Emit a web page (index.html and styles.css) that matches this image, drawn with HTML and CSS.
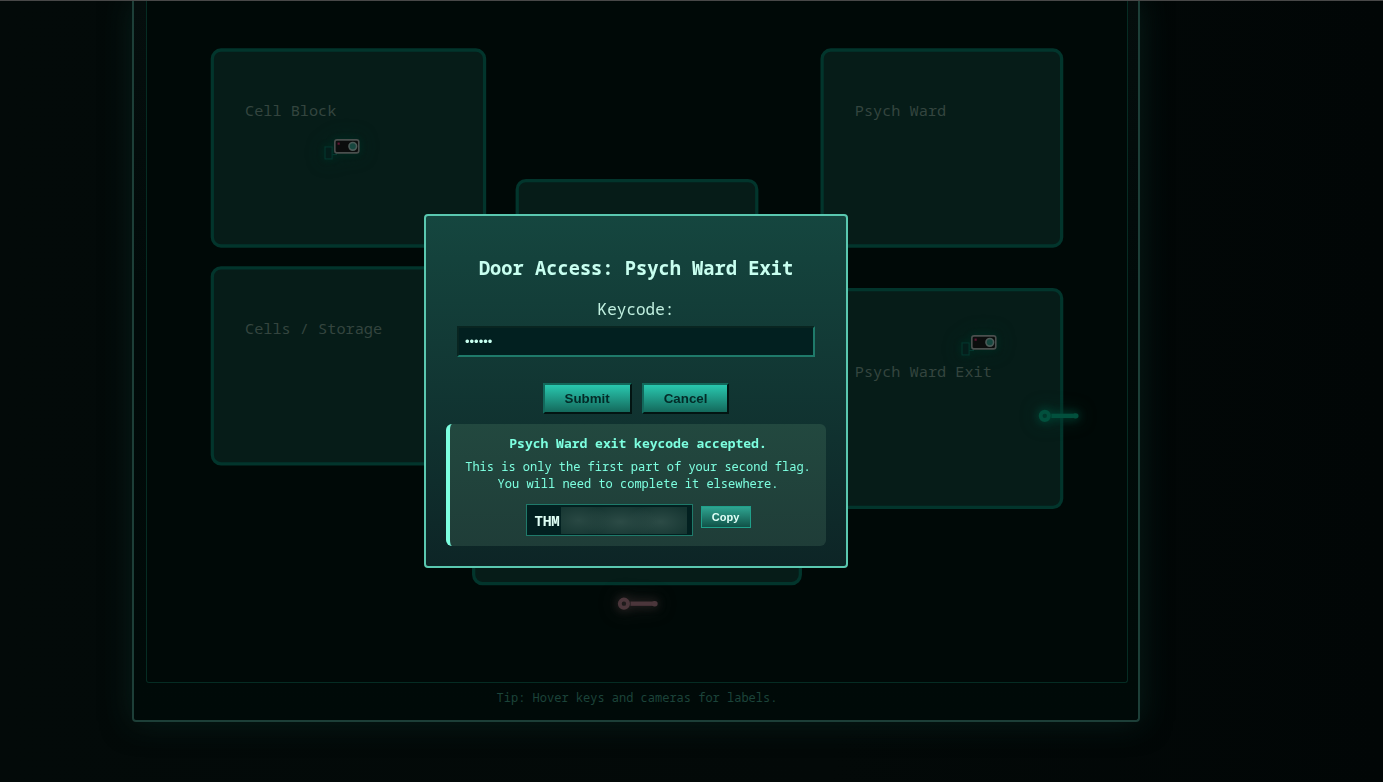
FILE: index.html
```html
<!DOCTYPE html>
<html lang="en">
<head>
    <meta charset="UTF-8">
    <meta name="viewport" content="width=device-width, initial-scale=1.0">
    <title>Door Access</title>
    <link rel="stylesheet" href="styles.css">
</head>
<body>
    <main class="console">
        <svg class="map" viewBox="0 15 900 625" role="img" aria-label="Facility map">
            <defs>
                <g id="camera">
                    <g class="camera-mount">
                        <rect x="163.5" y="149" width="6.5" height="11"/>
                        <path d="M170 156h4v-3"/>
                    </g>
                    <rect class="camera-body" x="172.5" y="142.5" width="22" height="12" rx="2"/>
                    <circle class="camera-lens" cx="189" cy="148.5" r="3.5"/>
                    <rect class="camera-led" x="175" y="145" width="2" height="2"/>
                </g>
                <g id="key">
                    <circle cx="0" cy="0" r="3.8" fill="none" stroke-width="3.6"/>
                    <path d="M6 0H28" stroke-width="4"/>
                    <path d="M28 0H28.5" stroke-width="5" stroke-linecap="round"/>
                </g>
            </defs>

            <!-- Rooms -->
            <rect class="room" x="60" y="60" width="250" height="180" rx="8"/>
            <rect class="room" x="60" y="260" width="250" height="180" rx="8"/>
            <rect class="room" x="340" y="180" width="220" height="200" rx="8"/>
            <rect class="room" x="620" y="60" width="220" height="180" rx="8"/>
            <rect class="room" x="620" y="280" width="220" height="200" rx="8"/>
            <rect class="room" x="300" y="450" width="300" height="100" rx="8"/>

            <text class="room-label" x="90" y="121">Cell Block</text>
            <text class="room-label" x="90" y="321">Cells / Storage</text>
            <text class="room-label" x="650" y="121">Psych Ward</text>
            <text class="room-label" x="650" y="360">Psych Ward Exit</text>

            <!-- Cameras -->
            <use class="camera" href="#camera"/>
            <use class="camera" href="#camera" x="585" y="180"/>

            <!-- Keys -->
            <use class="key-open" href="#key" x="824.5" y="396"/>
            <use class="key-locked" href="#key" x="438" y="568.5"/>
        </svg>
        <p class="tip">Tip: Hover keys and cameras for labels.</p>
    </main>

    <div class="overlay">
        <form class="modal" role="dialog" aria-labelledby="doorTitle">
            <h3 id="doorTitle">Door Access: Psych Ward Exit</h3>
            <label for="keycode">Keycode:</label>
            <input type="password" id="keycode" value="123456">
            <div class="actions">
                <button type="button">Submit</button>
                <button type="button">Cancel</button>
            </div>
            <div class="message">
                <strong>Psych Ward exit keycode accepted.</strong>
                <p>This is only the first part of your second flag. You will need to complete it elsewhere.</p>
                <div class="flag-row">
                    <code class="flag">THM<span class="redacted"></span></code>
                    <button type="button" class="copy">Copy</button>
                </div>
            </div>
        </form>
    </div>
</body>
</html>
```
FILE: styles.css
```css
* {
    box-sizing: border-box;
}
body {
    margin: 0;
    min-height: 100vh;
    padding: 0 111px 60px 0;
    border-top: 1px solid #484848;
    background: linear-gradient(90deg, #030a09 0%, #030908 60%, #010606 100%);
    color: #c8fff0;
    font-family: "Noto Sans Mono", "DejaVu Sans Mono", monospace;
    font-size: 16px;
}
.console {
    max-width: 1008px;
    margin: 0 auto;
    padding: 0 10px 14px 12px;
    border: 2px solid #1d3f38;
    border-top: none;
    border-radius: 0 0 4px 4px;
    background: linear-gradient(#050e0d, #010a09 40%, #000a08);
    box-shadow: 0 0 30px #071e1a;
}
.map {
    display: block;
    width: 100%;
    border: 1px solid #052c23;
    border-top: none;
    border-radius: 0 0 3px 3px;
    background: #000907;
}
.room {
    fill: #061c18;
    stroke: #02352c;
    stroke-width: 3;
}
.room-label {
    fill: #34453f;
    font-size: 14px;
}
.camera {
    filter: drop-shadow(0 0 3px #00291f) drop-shadow(0 0 7px #00241d);
}
.camera-mount {
    fill: #041d1a;
    stroke: #04382f;
}
.camera-body {
    fill: #0b0d0d;
    stroke: #4a4f4e;
    stroke-width: 1.5px;
}
.camera-lens {
    fill: #16473f;
    stroke: #4b5b58;
    stroke-width: 1.5px;
}
.camera-led {
    fill: #5e1533;
}
.key-open {
    stroke: #02503d;
    filter: drop-shadow(0 0 4px #004a39) drop-shadow(0 0 7px #003026);
}
.key-locked {
    stroke: #4b363b;
    filter: drop-shadow(0 0 4px #2e2728) drop-shadow(0 0 7px #1d1b1b);
}
.tip {
    margin: 7px 0 0;
    color: #1c443a;
    font-size: 12px;
    line-height: 16px;
    text-align: center;
}
.overlay {
    position: fixed;
    inset: 0;
    display: grid;
    place-items: center;
    padding-right: 111px;
}
.modal {
    width: 424px;
    max-width: 100%;
    padding: 20px;
    border: 2px solid #5ac8b0;
    border-radius: 4px;
    background: linear-gradient(#15463f, #0d2526);
    text-align: center;
}
.modal label {
    display: block;
    margin-bottom: 5px;
    color: #c0f0e0;
    line-height: 23px;
}
.modal input {
    display: block;
    width: 358px;
    max-width: 100%;
    height: 31px;
    margin: 0 auto 26px;
    padding: 6px;
    border: 2px inset #1f7a6a;
    background: #022020;
    color: #c8fff0;
    font-family: Arial, "Liberation Sans", sans-serif;
    font-size: 13px;
}
.actions {
    display: flex;
    justify-content: center;
    gap: 10px;
    margin-bottom: 10px;
}
.actions button {
    height: 31px;
    padding: 0 20px;
    border: 2px outset #13695c;
    background: linear-gradient(#29c8af, #14695c);
    color: #032a27;
    font-family: Arial, "Liberation Sans", sans-serif;
    font-weight: bold;
}
.message {
    padding: 10px;
    border-left: 4px solid #7dffe0;
    border-radius: 6px;
    background: linear-gradient(#22483f, #1f3d38);
    color: #7dffe0;
    font-size: 12px;
    line-height: 17px;
}
.message strong {
    display: block;
    font-size: 13px;
    line-height: 18px;
}
.message p {
    margin: 6px 0 12px;
}
.flag-row {
    display: flex;
    justify-content: center;
    align-items: flex-start;
    gap: 8px;
}
.flag {
    display: flex;
    align-items: center;
    width: 167px;
    height: 32px;
    padding: 0 5px 0 8px;
    border: 1px solid #1f7a6a;
    background: #022020;
    color: #dffff5;
    font-family: inherit;
    font-size: 14px;
    font-weight: bold;
}
.redacted {
    flex: 1;
    height: 27px;
    margin-left: 1px;
    background:
        radial-gradient(ellipse 30px 18px at 14% 50%, #294843, transparent),
        radial-gradient(ellipse 38px 18px at 47% 55%, #2c4b46, transparent),
        radial-gradient(ellipse 34px 18px at 79% 55%, #2c4b46, transparent),
        #153531;
}
.copy {
    width: 50px;
    height: 22px;
    margin-top: 2px;
    padding: 0;
    border: 1px solid #1fa08a;
    background: linear-gradient(#2fa591, #115248);
    color: #e0fff7;
    font-family: Arial, "Liberation Sans", sans-serif;
    font-size: 11px;
    font-weight: bold;
}
```
